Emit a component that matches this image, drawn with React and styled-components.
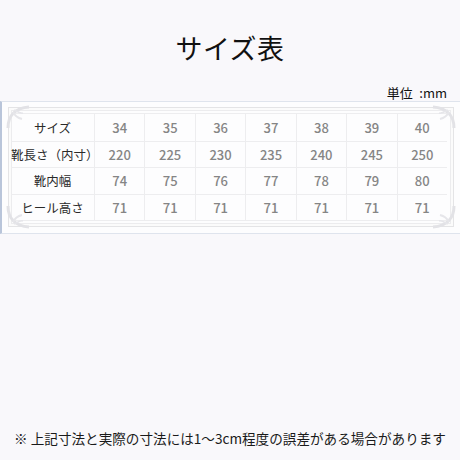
import React from 'react';
import styled, { createGlobalStyle } from 'styled-components';

const Global = createGlobalStyle`
  html, body {
    margin: 0;
    padding: 0;
    background: #f9f8fb;
  }
  body {
    font-family: 'Noto Sans CJK JP', 'Noto Sans', sans-serif;
  }
`;

const Page = styled.div`
  width: 460px;
  height: 460px;
  display: flex;
  flex-direction: column;
  box-sizing: border-box;
`;

const Title = styled.h1`
  margin: 31px 0 0;
  font-size: 27px;
  font-weight: 400;
  line-height: 34px;
  color: #111;
  text-align: center;
  letter-spacing: 0.5px;
`;

const Unit = styled.div`
  margin: 20px 13px 0 0;
  font-size: 13px;
  line-height: 16px;
  color: #111;
  text-align: right;
`;

const Panel = styled.div`
  background: #fdfdfe;
  border-top: 1px solid #dfe4ed;
  border-bottom: 1px solid #dfe4ed;
  border-left: 2px solid #b9c5da;
  padding: 5px 6px 6px 6px;
`;

const Frame = styled.div`
  position: relative;
  border: 1px solid #e4e4e6;
  box-shadow: inset 0 0 0 2px #fbfbfb, inset 0 0 0 3px #ececee;
  padding: 5px 6px 5px 2px;
`;

const Corner = styled.svg`
  position: absolute;
  width: 26px;
  height: 26px;
  ${(p) => (p.$top ? 'top: -4px;' : 'bottom: -4px;')}
  ${(p) => (p.$left ? 'left: -4px;' : 'right: -4px;')}
  transform: scale(${(p) => (p.$left ? 1 : -1)}, ${(p) => (p.$top ? 1 : -1)});
`;

const Grid = styled.div`
  display: grid;
  grid-template-columns: 83px repeat(7, 1fr);
  border-top: 1px solid #ededef;
  border-bottom: 1px solid #ededef;
`;

const Cell = styled.div`
  height: 26.5px;
  display: flex;
  align-items: center;
  justify-content: center;
  font-size: ${(p) => (p.$label ? '12.5px' : '13px')};
  font-weight: ${(p) => (p.$label ? 400 : 500)};
  color: ${(p) => (p.$label ? '#2a2a2a' : '#858585')};
  border-left: ${(p) => (p.$first ? 'none' : '1px solid #ededef')};
  border-top: ${(p) => (p.$topRow ? 'none' : '1px solid #ededef')};
  box-sizing: border-box;
`;

const Note = styled.p`
  margin: auto 0 13px;
  font-size: 13.6px;
  line-height: 18px;
  color: #1a1a1a;
  text-align: center;
  white-space: nowrap;
`;

const rows = [
  ['サイズ', '34', '35', '36', '37', '38', '39', '40'],
  ['靴長さ（内寸）', '220', '225', '230', '235', '240', '245', '250'],
  ['靴内幅', '74', '75', '76', '77', '78', '79', '80'],
  ['ヒール高さ', '71', '71', '71', '71', '71', '71', '71'],
];

const CornerArt = (props) => (
  <Corner viewBox="0 0 26 26" {...props}>
    <path d="M3 24 C3 12 10 4 24 3" fill="none" stroke="#e2e2e6" strokeWidth="3" />
    <path d="M8 8 C10 12 13 14 17 15" fill="none" stroke="#e6e6ea" strokeWidth="2" />
    <path d="M9 6 C13 8 16 10 18 9" fill="none" stroke="#e6e6ea" strokeWidth="1.5" />
  </Corner>
);

export default function App() {
  return (
    <>
      <Global />
      <Page>
        <Title>サイズ表</Title>
        <Unit>単位{'\u2002'}:mm</Unit>
        <Panel>
          <Frame>
            <CornerArt $top $left />
            <CornerArt $top />
            <CornerArt $left />
            <CornerArt />
            <Grid>
              {rows.map((row, r) =>
                row.map((v, c) => (
                  <Cell key={`${r}-${c}`} $label={c === 0} $first={c === 0} $topRow={r === 0}>
                    {v}
                  </Cell>
                ))
              )}
            </Grid>
          </Frame>
        </Panel>
        <Note>※ 上記寸法と実際の寸法には1〜3cm程度の誤差がある場合があります</Note>
      </Page>
    </>
  );
}
